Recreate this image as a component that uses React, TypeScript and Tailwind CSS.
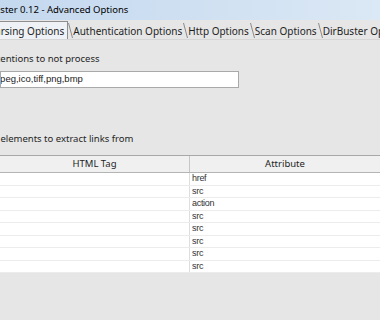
import React from "react";

const tabs = [
    "Authentication Options",
    "Http Options",
    "Scan Options",
    "DirBuster Options",
];

const rows = [
    { tag: "a", attr: "href" },
    { tag: "img", attr: "src" },
    { tag: "form", attr: "action" },
    { tag: "script", attr: "src" },
    { tag: "iframe", attr: "src" },
    { tag: "div", attr: "src" },
    { tag: "frame", attr: "src" },
    { tag: "embed", attr: "src" },
];

const Slash: React.FC = () => (
    <svg width="5" height="17" viewBox="0 0 5 17" className="shrink-0">
        <path d="M0.5 1 L4.5 16" stroke="#8a8a8a" strokeWidth="1" fill="none" />
    </svg>
);

const App: React.FC = () => {
    return (
        <div
            className="w-[380px] h-[320px] overflow-hidden bg-[#e6e6e6] flex flex-col text-[9.5px] text-[#1e1e1e]"
            style={{ fontFamily: '"Noto Sans", sans-serif' }}
        >
            {/* Title bar */}
            <div className="h-[20px] shrink-0 bg-gradient-to-r from-[#c4d8ee] via-[#cfe0f2] to-[#dbe8f5] flex items-center overflow-hidden">
                <span className="-ml-[25px] mt-[1px] text-[9.5px] text-black whitespace-nowrap">
                    DirBuster 0.12 - Advanced Options
                </span>
            </div>

            {/* Tabs */}
            <div className="h-[20px] shrink-0 flex items-end overflow-hidden whitespace-nowrap text-[10px] border-b border-[#d6d6d6]">
                <div className="h-[18px] -ml-[12px] pr-[3px] pt-[2px] flex items-center bg-[#eef2f6] border border-[#8e8e8e] border-b-0">
                    Parsing Options
                </div>
                {tabs.map((t) => (
                    <div key={t} className="h-[17px] flex items-center pr-[1px]">
                        <Slash />
                        <span className="pt-[2px]">{t}</span>
                    </div>
                ))}
            </div>

            {/* Content */}
            <div className="flex flex-col pt-[12px]">
                <div className="h-[14px] -ml-[31px] flex items-center whitespace-nowrap">
                    File extentions to not process
                </div>
                <div className="mt-[5px] h-[17px] w-[239px] bg-white border border-[#a9a9a9] flex items-center overflow-hidden whitespace-nowrap">
                    <span
                        className="-ml-[3px] text-[9.5px] text-[#222]"
                        style={{ fontFamily: '"Liberation Sans", Arial, sans-serif' }}
                    >
                        jpeg,ico,tiff,png,bmp
                    </span>
                </div>

                <div className="mt-[44px] h-[14px] -ml-[28px] flex items-center whitespace-nowrap">
                    HTML elements to extract links from
                </div>

                {/* Table */}
                <div className="mt-[9px] flex flex-col">
                    <div className="h-[18px] grid grid-cols-[190px_1fr] bg-[#f0f0f0] border-t border-[#a8a8a8] border-b border-b-[#b4b4b4]">
                        <div className="flex items-center justify-center border-r border-[#c6c6c6]">HTML Tag</div>
                        <div className="flex items-center justify-center">Attribute</div>
                    </div>
                    <div
                        className="flex flex-col bg-white"
                        style={{ fontFamily: '"Liberation Sans", Arial, sans-serif' }}
                    >
                        {rows.map((r, i) => (
                            <div
                                key={i}
                                className="h-[12.5px] grid grid-cols-[190px_1fr] border-b border-[#ececec] text-[9px] tracking-[-0.3px] text-[#333] leading-none"
                            >
                                <div className="border-r border-[#dedede]" />
                                <div className="pl-[2px] flex items-center">{r.attr}</div>
                            </div>
                        ))}
                    </div>
                </div>
            </div>
        </div>
    );
};

export default App;
